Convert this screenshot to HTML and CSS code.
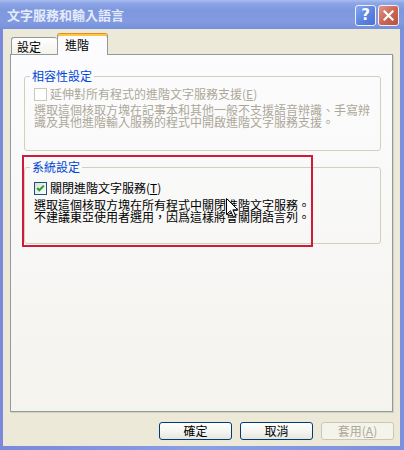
FILE: index.html
```html
<!DOCTYPE html>
<html lang="zh-Hant">
<head>
<meta charset="utf-8">
<title>文字服務和輸入語言</title>
<link rel="stylesheet" href="styles.css">
</head>
<body>
<div class="window">
  <div class="titlebar">
    <span class="title">文字服務和輸入語言</span>
    <div class="tbtns">
      <span class="tbtn help">?</span>
      <span class="tbtn close">
        <svg width="11" height="11" viewBox="0 0 11 11"><path d="M1.5 1.5 L9.5 9.5 M9.5 1.5 L1.5 9.5" stroke="#fff" stroke-width="2.2" stroke-linecap="square" fill="none"/></svg>
      </span>
    </div>
  </div>
  <div class="client">
    <div class="tabs">
      <div class="tab tab-inactive">設定</div>
      <div class="tab tab-active">進階</div>
    </div>
    <div class="panel">
      <fieldset class="group group-compat">
        <legend>相容性設定</legend>
        <div class="check check-disabled">
          <span class="box"></span>
          <span>延伸對所有程式的進階文字服務支援(<u>E</u>)</span>
        </div>
        <p class="desc desc-disabled">選取這個核取方塊在記事本和其他一般不支援語音辨識、手寫辨<br>識及其他進階輸入服務的程式中開啟進階文字服務支援。</p>
      </fieldset>
      <fieldset class="group group-system">
        <legend>系統設定</legend>
        <div class="check">
          <span class="box box-checked">
            <svg width="11" height="11" viewBox="0 0 11 11"><path d="M2.2 5 L4.3 7.3 L8.8 2.6" stroke="#21a121" stroke-width="2" fill="none"/></svg>
          </span>
          <span>關閉進階文字服務(<u>T</u>)</span>
        </div>
        <p class="desc">選取這個核取方塊在所有程式中關閉進階文字服務。<br>不建議東亞使用者選用，因爲這樣將會關閉語言列。</p>
      </fieldset>
      <div class="highlight"></div>
      <svg class="cursor" width="13" height="20" viewBox="0 0 13 20"><path d="M0.5 0.5 L0.5 16.5 L4.5 12.7 L7.3 18.8 L9.6 17.8 L6.9 11.8 L11.8 11.8 Z" fill="#fff" stroke="#000" stroke-width="1" stroke-linejoin="miter"/></svg>
    </div>
    <div class="buttons">
      <span class="btn">確定</span>
      <span class="btn">取消</span>
      <span class="btn btn-disabled">套用(<u>A</u>)</span>
    </div>
  </div>
</div>
</body>
</html>
```
FILE: styles.css
```css
body {
  margin: 0;
  background: #7b8fdc;
  font-family: "Noto Sans CJK TC", "Noto Sans", sans-serif;
  font-size: 12px;
  color: #000;
}

.window {
  width: 404px;
  height: 450px;
  display: flex;
  flex-direction: column;
  background: linear-gradient(90deg, #7c88da, #8a9fe2 50%, #7d90dc);
}

.titlebar {
  height: 29px;
  flex: none;
  display: flex;
  align-items: center;
  padding: 0 5px 0 7px;
  background: linear-gradient(#a9bdf0, #8ea6e6 3px, #7e98df 10px, #819ae0 22px, #7690da);
}

.title {
  flex: 1;
  color: #e4ebfa;
  font-weight: bold;
  font-size: 13px;
  line-height: 14px;
  letter-spacing: 0;
}

.tbtns {
  display: flex;
  gap: 2px;
  margin-top: 2px;
}

.tbtn {
  width: 21px;
  height: 21px;
  box-sizing: border-box;
  border: 1px solid #edf1fc;
  border-radius: 3px;
  display: flex;
  align-items: center;
  justify-content: center;
}

.help {
  background: linear-gradient(135deg, #86a8f2, #5a82e0 55%, #4a72d6);
  color: #fff;
  font-family: "DejaVu Sans", sans-serif;
  font-weight: bold;
  font-size: 15px;
  line-height: 15px;
}

.close {
  background: linear-gradient(135deg, #e0958a, #c86450 55%, #b8523f);
}

.client {
  flex: 1;
  margin: 0 4px 4px 3px;
  background: #ece9d8;
  display: flex;
  flex-direction: column;
  padding: 4px 0 6px;
  min-height: 0;
}

.tabs {
  display: flex;
  align-items: flex-start;
  height: 22px;
  margin: 0 0 -1px 8px;
  position: relative;
  z-index: 1;
}

.tab {
  box-sizing: border-box;
  border: 1px solid #919b9c;
  border-bottom: none;
  border-radius: 3px 3px 0 0;
  font-size: 12px;
}

.tab-inactive {
  width: 46px;
  height: 17px;
  margin-top: 4px;
  padding: 2px 0 0 5px;
  line-height: 13px;
  background: linear-gradient(#ffffff, #f3f2ea);
  border-right: none;
}

.tab-active {
  width: 51px;
  height: 22px;
  padding: 4px 0 0 7px;
  line-height: 14px;
  background: #fcfcfe;
  border-top: 1px solid #e68b2c;
  box-shadow: inset 0 2px 0 #ffc73c;
}

.panel {
  flex: 1;
  margin: 0 7px;
  border: 1px solid #919b9c;
  background: linear-gradient(#fcfcfe, #f4f3ee);
  box-shadow: 1px 1px 0 #d4d0c0;
  padding: 12px 11px 0 13px;
  position: relative;
  display: flex;
  flex-direction: column;
}

.group {
  margin: 0;
  min-width: 0;
  border: 1px solid #d0d0bf;
  border-radius: 3px;
  padding: 4px 8px 22px 9px;
}

.group legend {
  color: #0046d5;
  line-height: 14px;
  padding: 0 2px;
  margin-left: -4px;
}

.group-compat {
  margin-top: 2px;
}

.group-system {
  margin-top: 9px;
  padding-top: 7px;
  padding-bottom: 20px;
}

.check {
  display: flex;
  align-items: center;
  gap: 3px;
  height: 14px;
  line-height: 14px;
}

.check-disabled {
  color: #aca899;
}

.box {
  width: 13px;
  height: 13px;
  box-sizing: border-box;
  border: 1px solid #1c5180;
  background: linear-gradient(135deg, #dcdcd7, #ffffff);
  display: flex;
  align-items: center;
  justify-content: center;
  flex: none;
}

.check-disabled .box {
  border-color: #cac8bb;
  background: #fff;
}

.desc {
  margin: 3px 0 0;
  line-height: 12px;
  white-space: nowrap;
}

.group-system .desc {
  margin-top: 4px;
}

.desc-disabled {
  color: #aca899;
}

.highlight {
  position: absolute;
  left: 11px;
  top: 100px;
  width: 291px;
  height: 92px;
  box-sizing: border-box;
  border: 2px solid #cf1a3a;
  pointer-events: none;
}

.cursor {
  position: absolute;
  left: 215px;
  top: 143px;
}

.buttons {
  display: flex;
  justify-content: flex-end;
  gap: 8px;
  margin: 10px 6px 0 0;
  height: 18px;
  flex: none;
}

.btn {
  width: 73px;
  height: 18px;
  box-sizing: border-box;
  border: 1px solid #003c74;
  border-radius: 3px;
  background: linear-gradient(#ffffff, #f3f3ef 60%, #e6e5dd);
  text-align: center;
  line-height: 16px;
  font-size: 12px;
}

.btn-disabled {
  border-color: #c9c7ba;
  background: #f5f4ea;
  color: #aca899;
}
```
